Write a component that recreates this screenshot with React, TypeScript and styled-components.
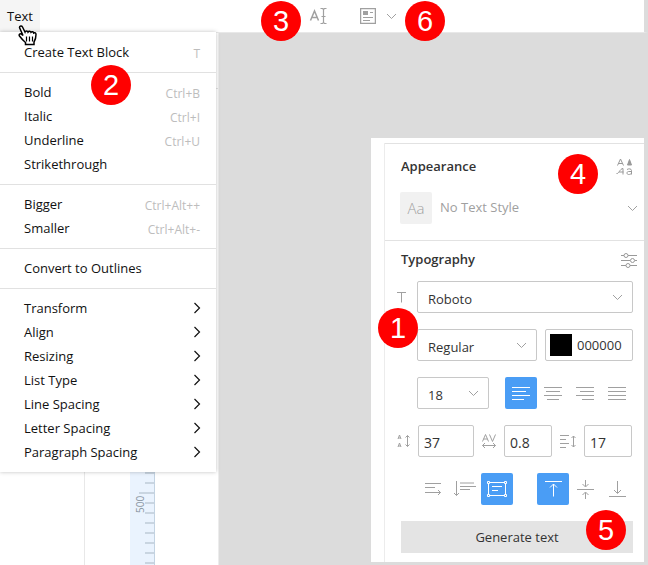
import React from "react";
import styled, { createGlobalStyle } from "styled-components";

const Global = createGlobalStyle`
  * { box-sizing: border-box; }
  body { margin: 0; background: #fff; }
  body, button, input, select { font-family: "Open Sans", "Noto Sans", sans-serif; font-size: 13px; }
  button, input, select { margin: 0; padding: 0; border: 0; background: none; color: inherit; }
`;

const Page = styled.div`
  position: relative;
  display: flex;
  flex-direction: column;
  min-height: 100vh;
  color: #222;
`;

const TopBar = styled.header`
  display: flex;
  align-items: stretch;
  height: 33px;
  background: #fff;
  border-right: 4px solid #dcdcdc;
  border-bottom: 1px solid #e8e8e8;
`;

const MenuTitle = styled.button`
  width: 40px;
  background: #f5f5f5;
  color: #111;
`;

const Tools = styled.div`
  display: flex;
  align-items: center;
  margin-left: 268px;
`;

const Tool = styled.button<{ $gap?: number }>`
  display: flex;
  margin-left: ${(p) => p.$gap ?? 0}px;
  color: #a0a0a0;
`;

const Body = styled.div`
  display: flex;
  flex: 1;
`;

const Sidebar = styled.aside`
  display: flex;
  width: 219px;
  flex: none;
  border-right: 1px solid #ececec;
`;

const Pages = styled.div`
  width: 85px;
  border-right: 1px solid #e8e8e8;
`;

const Ruler = styled.div`
  width: 25px;
  margin-left: 45px;
  background: #eaf3fe;
  border-right: 1px solid #c3d3e2;
`;

const RulerEdge = styled.div`
  flex: 1;
  height: 56px;
  border-bottom: 1px solid #e2e2e2;
`;

const Canvas = styled.main`
  display: flex;
  align-items: flex-start;
  flex: 1;
  padding: 105px 4px 3px 152px;
  background: #dcdcdc;
`;

const Panel = styled.section`
  flex: 1;
  padding: 5px 0 0 13px;
  background: #fff;
`;

const PanelInner = styled.div`
  border-left: 1px solid #ececec;
`;

const Group = styled.div`
  border-top: 1px solid #e2e2e2;
  padding: 6px 11px 9px 12px;
`;

const StyleGroup = styled(Group)`
  padding: 10px 6px 16px 15px;
`;

const Head = styled.div`
  display: flex;
  align-items: center;
  justify-content: space-between;
  height: 24px;
`;

const StyleHead = styled(Head)`
  margin: 0 0 14px 1px;
  padding-right: 4px;
`;

const TypeHead = styled(Head)`
  margin: 0 -4px 10px 4px;
`;

const Heading = styled.h2`
  margin: 0;
  font-size: 13px;
  font-weight: 600;
  color: #333;
`;

const IconButton = styled.button`
  display: flex;
  padding-top: 2px;
  color: #999;
`;

const StyleRow = styled.div`
  display: flex;
  align-items: center;
  gap: 8px;
  color: #a0a0a0;
`;

const StyleTile = styled.span`
  display: grid;
  place-items: center;
  width: 32px;
  height: 32px;
  border-radius: 2px;
  background: #f1f1f1;
  font-size: 15px;
  font-weight: 300;
`;

const Picker = styled.span<{ $bare?: boolean; $inset?: number }>`
  position: relative;
  display: flex;
  flex: 1;
  height: 32px;
  border: ${(p) => (p.$bare ? "0" : "1px solid #c8c8c8")};
  border-radius: 2px;
  color: ${(p) => (p.$bare ? "#a0a0a0" : "#333")};
  select {
    width: 100%;
    padding-left: ${(p) => (p.$bare ? 0 : 10)}px;
    padding-top: ${(p) => (p.$bare ? 0 : 4)}px;
    padding-bottom: ${(p) => (p.$bare ? 2 : 0)}px;
    appearance: none;
  }
  svg {
    position: absolute;
    right: ${(p) => p.$inset ?? 9}px;
    top: 50%;
    margin-top: -3px;
    color: #a0a0a0;
    pointer-events: none;
  }
`;

const Form = styled.div`
  display: flex;
  flex-direction: column;
  gap: 16px;
`;

const Row = styled.div<{ $cols: string }>`
  display: grid;
  grid-template-columns: ${(p) => p.$cols};
  align-items: center;
  min-height: 32px;
`;

const Label = styled.label<{ $center?: boolean }>`
  display: flex;
  justify-content: ${(p) => (p.$center ? "center" : "flex-start")};
  color: #a0a0a0;
`;

const Field = styled.input`
  width: 100%;
  min-width: 0;
  height: 32px;
  padding: 2px 5px 0;
  border: 1px solid #c8c8c8;
  border-radius: 2px;
  color: #333;
  font-size: 14px;
`;

const NumberCell = styled.span`
  padding: 0 0 0 1px;
`;

const ColorBox = styled.div`
  display: flex;
  align-items: center;
  height: 32px;
  padding-left: 4px;
  border: 1px solid #c8c8c8;
  border-radius: 2px;
`;

const Swatch = styled.button`
  flex: none;
  width: 22px;
  height: 22px;
  background: #000;
`;

const HexField = styled.input`
  width: 100%;
  min-width: 0;
  padding-left: 5px;
  color: #333;
`;

const Buttons = styled.div`
  display: flex;
`;

const Toggle = styled.button<{ $on?: boolean }>`
  display: grid;
  place-items: center;
  width: 32px;
  height: 32px;
  border-radius: 2px;
  background: ${(p) => (p.$on ? "#4a9df5" : "transparent")};
  color: ${(p) => (p.$on ? "#fff" : "#a0a0a0")};
`;

const Generate = styled.button`
  height: 32px;
  margin-left: 4px;
  background: #e4e4e4;
  color: #333;
`;

const Menu = styled.nav`
  position: absolute;
  left: 0;
  top: 32px;
  width: 216px;
  padding: 8px 0;
  background: #fff;
  box-shadow: 0 0 4px rgba(0, 0, 0, 0.25);
`;

const Divider = styled.hr`
  height: 1px;
  margin: 8px 0 7px;
  border: 0;
  background: #e1e1e1;
`;

const Item = styled.button`
  display: flex;
  align-items: center;
  justify-content: space-between;
  width: 100%;
  height: 24px;
  padding: 0 15px 0 24px;
  color: #111;
`;

const Keys = styled.kbd`
  padding: 2px 1px 0 0;
  font: 12px "Open Sans", sans-serif;
  color: #bdbdbd;
`;

const Badge = styled.span<{ $x: number; $y: number }>`
  position: absolute;
  left: ${(p) => p.$x}px;
  top: ${(p) => p.$y}px;
  width: 40px;
  height: 40px;
  border-radius: 50%;
  background: #f00;
  color: #fff;
  font: 29px/41px "Liberation Sans", sans-serif;
  text-align: center;
`;

const Pointer = styled.svg`
  position: absolute;
  left: 18px;
  top: 25px;
`;

type SvgProps = { w: number; h: number; d: string; width?: number };
const Icon = ({ w, h, d, width = 1 }: SvgProps) => (
  <svg width={w} height={h} viewBox={`0 0 ${w} ${h}`} fill="none" stroke="currentColor" strokeWidth={width} aria-hidden="true">
    <path d={d} />
  </svg>
);

const Down = () => <Icon w={11} h={7} d="M1 1l4.5 4.5L10 1" />;

const menuGroups: { label: string; keys?: string; sub?: boolean }[][] = [
  [{ label: "Create Text Block", keys: "T" }],
  [
    { label: "Bold", keys: "Ctrl+B" },
    { label: "Italic", keys: "Ctrl+I" },
    { label: "Underline", keys: "Ctrl+U" },
    { label: "Strikethrough" },
  ],
  [
    { label: "Bigger", keys: "Ctrl+Alt++" },
    { label: "Smaller", keys: "Ctrl+Alt+-" },
  ],
  [{ label: "Convert to Outlines" }],
  ["Transform", "Align", "Resizing", "List Type", "Line Spacing", "Letter Spacing", "Paragraph Spacing"].map((label) => ({
    label,
    sub: true,
  })),
];

const badges = [
  { n: 1, x: 378, y: 308 },
  { n: 2, x: 91, y: 65 },
  { n: 3, x: 261, y: 1 },
  { n: 4, x: 558, y: 154 },
  { n: 5, x: 586, y: 510 },
  { n: 6, x: 405, y: 1 },
];

const aligns = [
  { name: "Align left", d: "M0 .5h18M0 4.5h14M0 8.5h18M0 12.5h12" },
  { name: "Align center", d: "M0 .5h18M2 4.5h14M0 8.5h18M3 12.5h12" },
  { name: "Align right", d: "M0 .5h18M4 4.5h14M0 8.5h18M6 12.5h12" },
  { name: "Justify", d: "M0 .5h18M0 4.5h18M0 8.5h18M0 12.5h18" },
];

const RulerMarks = () => (
  <svg width="24" height="532" viewBox="0 33 24 532" aria-hidden="true">
    {Array.from({ length: 10 }, (_, i) => (
      <path key={i} d={`M${i === 2 ? 9 : 15} ${473 + i * 10}h${i === 2 ? 15 : 9}`} stroke="#c9d5e1" strokeWidth="2" />
    ))}
    <text x="0" y="0" transform="translate(14 513) rotate(-90)" fontSize="10" fontFamily="Open Sans" fill="#8b97a3">
      500
    </text>
  </svg>
);

const NumberInput = ({ id, value }: { id: string; value: string }) => (
  <NumberCell>
    <Field id={id} defaultValue={value} />
  </NumberCell>
);

export default function App() {
  return (
    <Page>
      <Global />
      <TopBar>
        <MenuTitle>Text</MenuTitle>
        <Tools>
          <Tool aria-label="Text tool">
            <svg width="20" height="18" viewBox="0 0 20 18" fill="none" stroke="currentColor" aria-hidden="true">
              <path d="M2.500 13.500L6.500 4l4 9.500M4 10.500h5" strokeWidth="1.500" />
              <path d="M12.500 1.500h2l1 1 1-1h2M12.500 16.500h2l1-1 1 1h2M15.500 2.500v13M13.500 9.500h4" strokeWidth="1.200" />
            </svg>
          </Tool>
          <Tool $gap={32} aria-label="Text frame">
            <svg width="16" height="16" viewBox="0 0 16 16" fill="none" stroke="currentColor" aria-hidden="true">
              <path d="M.5.500h15v15H.500z" strokeWidth="1.500" />
              <path d="M10 4.500h3M3 9.500h10M3 12.500h7" />
              <path d="M3 3h5v4H3z" fill="currentColor" stroke="none" />
            </svg>
          </Tool>
          <Tool $gap={10} aria-label="More frames">
            <Down />
          </Tool>
        </Tools>
      </TopBar>
      <Body>
        <Sidebar>
          <Pages />
          <Ruler>
            <RulerMarks />
          </Ruler>
          <RulerEdge />
        </Sidebar>
        <Canvas>
          <Panel>
            <PanelInner>
              <StyleGroup>
                <StyleHead>
                  <Heading>Appearance</Heading>
                  <IconButton aria-label="Text styles">
                    <svg width="18" height="18" viewBox="0 0 18 18" fill="none" stroke="currentColor" aria-hidden="true">
                      <path d="M1.500 7.500l3-6.500 3 6.500M2.500 5.500h4" />
                      <path d="M11.500 7l2-5.500 2 5.500zM12 5h3" fill="currentColor" />
                      <path d="M.5 15.500c2 1 3.500-5 6.500-5v6M3 14h4.500M11 11.500c1.500-1 4.500-1 4.500 1v4M15.500 13.500h-3c-2 0-2 3 0 3 1.500 0 3-.5 3-2" />
                    </svg>
                  </IconButton>
                </StyleHead>
                <StyleRow>
                  <StyleTile>Aa</StyleTile>
                  <Picker $bare $inset={0}>
                    <select aria-label="Text style">
                      <option>No Text Style</option>
                    </select>
                    <Down />
                  </Picker>
                </StyleRow>
              </StyleGroup>
              <Group>
                <TypeHead>
                  <Heading>Typography</Heading>
                  <IconButton aria-label="Typography settings">
                    <svg width="16" height="15" viewBox="0 0 16 15" fill="none" stroke="currentColor" aria-hidden="true">
                      <path d="M0 2.500h3M7 2.500h9M0 7.500h9M14 7.500h2M0 12.500h5M9 12.500h7" />
                      <circle cx="5" cy="2.500" r="2" />
                      <circle cx="11.500" cy="7.500" r="2" />
                      <circle cx="7" cy="12.500" r="2" />
                    </svg>
                  </IconButton>
                </TypeHead>
                <Form>
                  <Row $cols="20px 1fr">
                    <Label htmlFor="family" aria-label="Font family">
                      <Icon w={10} h={11} d="M0 .5h9M4.5 .5v10" />
                    </Label>
                    <Picker>
                      <select id="family">
                        <option>Roboto</option>
                      </select>
                      <Down />
                    </Picker>
                  </Row>
                  <Row $cols="20px 120fr 8px 88fr">
                    <span />
                    <Picker>
                      <select aria-label="Font weight">
                        <option>Regular</option>
                      </select>
                      <Down />
                    </Picker>
                    <span />
                    <ColorBox>
                      <Swatch aria-label="Text color" />
                      <HexField aria-label="Hex color" defaultValue="000000" />
                    </ColorBox>
                  </Row>
                  <Row $cols="20px 1fr 16px auto">
                    <span />
                    <Picker>
                      <select aria-label="Font size">
                        <option>18</option>
                      </select>
                      <Down />
                    </Picker>
                    <span />
                    <Buttons>
                      {aligns.map((a, i) => (
                        <Toggle key={a.name} $on={i === 0} aria-label={a.name} aria-pressed={i === 0}>
                          <Icon w={18} h={13} d={a.d} />
                        </Toggle>
                      ))}
                    </Buttons>
                  </Row>
                  <Row $cols="20px 57fr 29px 49fr 31px 49fr 1px">
                    <Label htmlFor="line" aria-label="Line spacing">
                      <Icon w={14} h={14} d="M1 5l1.500-4L4 5M1.500 4h2M1 13l1.500-4L4 13M1.500 12h2M10.500 1.500v11M8.500 3.500l2-2 2 2M8.500 10.500l2 2 2-2" />
                    </Label>
                    <NumberInput id="line" value="37" />
                    <Label $center htmlFor="letter" aria-label="Letter spacing">
                      <Icon w={14} h={15} d="M.5 7.500l3-7 3 7M1.500 5h4M7.500.500l3 7 3-7M.5 11.500h13M3 9l-2.500 2.500L3 14M11 9l2.500 2.500L11 14" />
                    </Label>
                    <NumberInput id="letter" value="0.8" />
                    <Label $center htmlFor="para" aria-label="Paragraph spacing">
                      <Icon w={16} h={13} d="M0 .5h9M0 4.500h6M0 8.500h9M0 12.500h6M13.500 1v11M11.500 3l2-2 2 2M11.500 10l2 2 2-2" />
                    </Label>
                    <NumberInput id="para" value="17" />
                  </Row>
                  <Row $cols="20px auto 1fr auto">
                    <span />
                    <Buttons>
                      <Toggle aria-label="Auto width">
                        <Icon w={16} h={12} d="M0 .5h16M0 4.500h10M0 9.500h15.500M13 7l2.500 2.500L13 12" />
                      </Toggle>
                      <Toggle aria-label="Auto height">
                        <Icon w={22} h={16} d="M2.500 0v14.500M0 12l2.500 2.500L5 12M6 2h14M6 5.500h16M6 8.500h10" />
                      </Toggle>
                      <Toggle $on aria-label="Fixed size" aria-pressed>
                        <Icon w={20} h={16} d="M3 1.500h14M3 14.500h14M1.500 3v10M18.500 3v10M.5.500h2v2h-2zM17.500.500h2v2h-2zM.5 13.500h2v2h-2zM17.500 13.500h2v2h-2zM5 5.500h10M5 9.500h6" />
                      </Toggle>
                    </Buttons>
                    <span />
                    <Buttons>
                      <Toggle $on aria-label="Align top" aria-pressed>
                        <Icon w={17} h={16} d="M0 .5h17M8.500 15.500V3M5 6.500L8.500 3 12 6.500" />
                      </Toggle>
                      <Toggle aria-label="Align middle">
                        <Icon w={17} h={19} d="M0 9.500h17M8.500 0v6.500M5.500 4l3 3 3-3M8.500 19v-6.500M5.500 15l3-3 3 3" />
                      </Toggle>
                      <Toggle aria-label="Align bottom">
                        <Icon w={17} h={16} d="M0 15.500h17M8.500 0v12M5 9l3.500 3.500L12 9" />
                      </Toggle>
                    </Buttons>
                  </Row>
                  <Generate>Generate text</Generate>
                </Form>
              </Group>
            </PanelInner>
          </Panel>
        </Canvas>
      </Body>
      <Menu aria-label="Text">
        {menuGroups.map((group, g) => (
          <React.Fragment key={g}>
            {g > 0 && <Divider />}
            {group.map((item) => (
              <Item key={item.label}>
                <span>{item.label}</span>
                {item.keys && <Keys>{item.keys}</Keys>}
                {item.sub && <Icon w={8} h={12} width={1.2} d="M1.500 1l5 5-5 5" />}
              </Item>
            ))}
          </React.Fragment>
        ))}
      </Menu>
      <Pointer width="20" height="21" viewBox="0 0 20 21" aria-hidden="true">
        <path
          d="M1.500 2.500C1.500.800 3.700.500 4.500 2l2.500 5c.5-1.500 2.500-1.500 3 0 .7-1.200 2.500-1 3 .3.800-1 2.300-.6 2.700.7 1.300-.8 2.300 0 2.300 1.500 0 4-.5 5-2 7.500v2.500H7.500v-2C5 15.500 3 13 1.500 11c-1-1.600.7-2.800 2-1.800L5 10.500z"
          fill="#fff"
          stroke="#000"
          strokeWidth="1.500"
        />
        <path d="M8.500 11.500v5M11.500 11.500v5M14.500 11.500v5" stroke="#000" strokeWidth="1.200" />
      </Pointer>
      {badges.map((b) => (
        <Badge key={b.n} $x={b.x} $y={b.y}>
          {b.n}
        </Badge>
      ))}
    </Page>
  );
}
